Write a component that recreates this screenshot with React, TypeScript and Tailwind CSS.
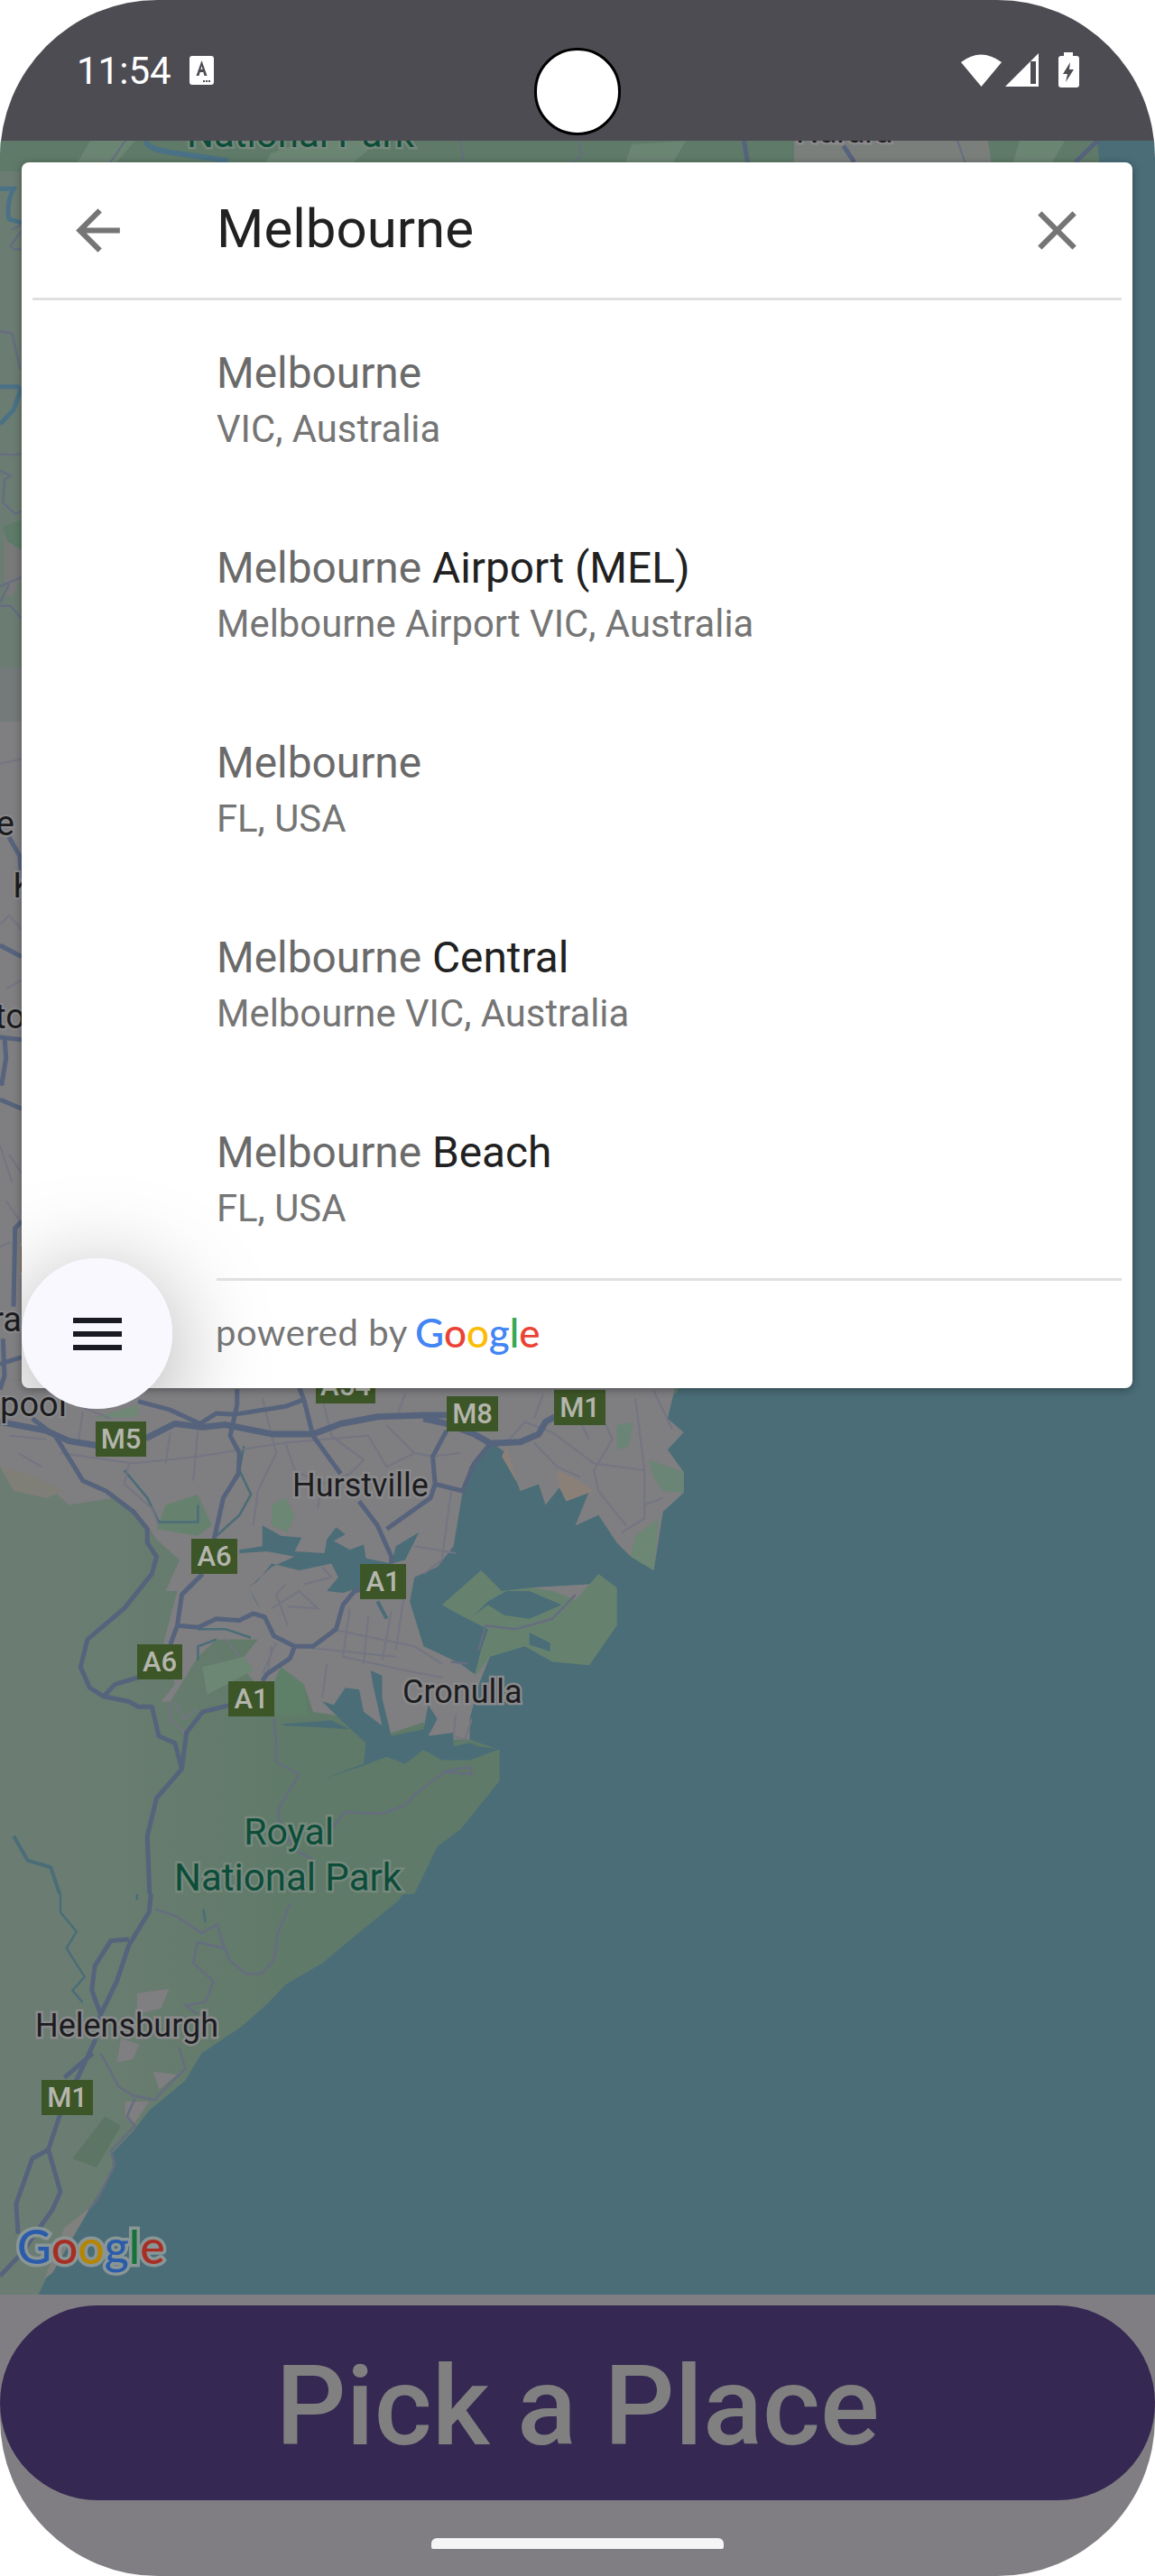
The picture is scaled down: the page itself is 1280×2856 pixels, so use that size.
const z3 = 'translate(0 1500) scale(0.5102 0.3827)';
const z4 = 'translate(0 2100) scale(0.4464 0.3333)';
const z8 = 'translate(0 150) scale(0.3333 0.3953)';
const z9 = 'translate(0 770) scale(0.3333 0.5102)';
const z10 = 'translate(0 150) scale(0.8163 0.3333)';

const WATER = '#4a6d78';
const GREEN = '#5f7a68';
const GREEN_PALE = '#6b7d72';
const URBAN = '#7f7e81';
const ROAD = '#56637c';
const THIN = '#666d80';
const MINOR = '#737582';

const shields = [
  { label: 'A54', x: 350, y: 1517, w: 66 },
  { label: 'M8', x: 495, y: 1548, w: 57 },
  { label: 'M1', x: 614, y: 1541, w: 57 },
  { label: 'M5', x: 106, y: 1576, w: 56 },
  { label: 'A6', x: 212, y: 1706, w: 51 },
  { label: 'A1', x: 399, y: 1734, w: 51 },
  { label: 'A6', x: 152, y: 1823, w: 50 },
  { label: 'A1', x: 253, y: 1864, w: 51 },
  { label: 'M1', x: 46, y: 2306, w: 57 },
];

const places = [
  { label: 'Hurstville', x: 324, y: 1659 },
  { label: 'Cronulla', x: 446, y: 1888 },
  { label: 'Helensburgh', x: 39, y: 2258 },
  { label: 'Narara', x: 882, y: 158 },
];

const cuts = [
  { label: 'e', x: 16, y: 926 },
  { label: 'K', x: 38, y: 995 },
  { label: 'to', x: 28, y: 1140 },
  { label: 'l', x: 30, y: 1411 },
  { label: 'ra', x: 24, y: 1476 },
  { label: 'rpool', x: 74, y: 1570 },
];

const results = [
  { match: 'Melbourne', rest: '', sub: 'VIC, Australia' },
  { match: 'Melbourne', rest: ' Airport (MEL)', sub: 'Melbourne Airport VIC, Australia' },
  { match: 'Melbourne', rest: '', sub: 'FL, USA' },
  { match: 'Melbourne', rest: ' Central', sub: 'Melbourne VIC, Australia' },
  { match: 'Melbourne', rest: ' Beach', sub: 'FL, USA' },
];

const COAST =
  'M0 80H1470L1450 190L1485 230L1450 280L1485 345L1485 405L1440 460L1420 630L1370 590L1340 550L1300 470L1250 500L1280 400L1215 390L1185 440L1170 380L1130 400L1100 290L1070 262L1020 330L1005 400L985 560L950 620L900 650L890 720L920 850L1000 900L1030 930L1070 860L1040 960L1020 1060L1020 1120';

const MapBackdrop = () => (
  <svg className="absolute inset-0" width="1280" height="2388" viewBox="0 156 1280 2388">
    <defs>
      <linearGradient id="landMid" x1="0" y1="0" x2="1" y2="0">
        <stop offset="0.1" stopColor={GREEN_PALE} />
        <stop offset="0.45" stopColor={GREEN} />
      </linearGradient>
      <linearGradient id="landSouth" x1="0" y1="0" x2="1" y2="0">
        <stop offset="0.17" stopColor={GREEN_PALE} />
        <stop offset="0.76" stopColor={GREEN} />
      </linearGradient>
    </defs>
    <rect x="0" y="156" width="1280" height="2388" fill={WATER} />

    {/* land north of the card */}
    <path d="M0 156H1216L1240 400L800 1400L750 1545H0Z" fill={GREEN} />
    <path d="M0 190H24V740H0Z" fill={GREEN_PALE} />
    <path d="M880 156H1095L1100 190H880Z" fill="#7a7f7c" />
    <path d="M100 156H150L120 190H80ZM300 170L340 156H420L380 190H290ZM700 160L760 156L740 190H690ZM1130 156H1180L1160 190H1120Z" fill="#6b8573" />
    <path d="M0 740H24V800H0Z" fill="#747a7a" />
    <path d="M0 800H24V1545H0Z" fill={URBAN} />
    <path d="M5 590L24 585V640L15 660H5Z" fill="#777a78" />
    <path d="M3 584L24 576V610L8 600Z" fill="#5d7b68" />

    {/* land below the card, z3 coordinates */}
    <g transform={z3}>
      <path d={`${COAST}L1085 1150L1085 1240L1000 1380L950 1430L900 1568H0Z`} fill="url(#landMid)" />
      <path
        d={`${COAST}L930 1120L920 1070L830 1110L800 1100L780 1060L680 1040L660 960L610 910L580 1000L520 900L450 990L440 910L530 880L560 830L470 830L430 880L370 1010L350 1010L380 960L355 840L385 690L360 690L390 600L340 540L320 500L250 420L150 440L100 380L0 330Z`}
        fill={URBAN}
      />
      <path d="M610 910L660 960L670 1050L600 1050L580 1000Z" fill="#5f8068" />
      <path d="M360 440L430 410L460 500L430 530L340 510Z" fill="#66826f" />
      <path d="M1410 310L1485 345L1485 405L1440 400L1420 360Z" fill="#6a8576" />
      <path d="M1380 530L1430 480L1420 630L1370 590Z" fill="#6c8773" />
      <path d="M1340 210L1375 200L1365 270L1340 280Z" fill="#6a8576" />
      <path d="M590 440L620 420L640 470L625 520L590 500Z" fill="#6c8773" />
      <path d="M1100 270L1125 380L1090 300Z" fill="#8a8078" />
      <path d="M1210 340L1250 365L1290 400L1230 430L1215 390Z" fill="#8a8078" />
      <path d="M0 330L60 350L140 400L100 420L30 400Z" fill="#7f7f78" />
      <path d="M440 910L530 880L550 920L450 990Z" fill="#6c8773" />
      <path d="M200 190L300 150L300 185L220 190Z" fill="#6f8876" />

      {/* Kurnell */}
      <path
        d="M960 730L1045 630L1090 690L1150 680L1280 670L1300 640L1340 680L1340 790L1280 905L1200 895L1140 850L1065 880L1030 940L1045 860L1060 800L1000 760Z"
        fill="#66826f"
      />
      <path d="M1155 680L1280 670L1250 715L1200 690Z" fill={URBAN} />
      <path d="M1030 760L1060 730L1095 760L1150 770L1220 730L1150 690L1100 690L1060 720Z" fill={WATER} />
      <path d="M1150 810L1195 840L1195 865L1150 845Z" fill={WATER} />

      {/* Georges River and Port Hacking */}
      <path
        d="M520 570L570 560L570 500L610 530L655 535L640 575L705 580L710 540L730 505L750 525L725 545L760 570L790 555L795 595L850 610L880 640L780 680L745 695L710 690L735 650L720 610L650 630L590 610L560 660L540 680L555 720L565 740L540 680L590 620L640 590L580 575L520 580Z"
        fill={WATER}
      />
      <path d="M910 520L880 600L850 610L860 560Z" fill={WATER} />
      <path
        d="M1085 1148L1020 1180L960 1180L920 1150L880 1190L840 1170L780 1200L700 1235L790 1190L795 1130L750 1075L700 1010L725 1020L750 970L780 975L790 1040L830 1080L810 960L805 920L830 935L830 1000L850 1110L920 1090L930 1020L950 1060L930 1110L985 1100L985 1140L1020 1130L1040 1140Z"
        fill={WATER}
      />
      <path d="M610 1075L720 1065L760 1090L700 1085L620 1080Z" fill={WATER} />

      <g fill="none" stroke={WATER} strokeWidth="2.5">
        <path d="M530 270L520 340L545 410L520 470L470 530" vectorEffect="non-scaling-stroke" />
        <path d="M270 340L320 420L345 490L430 490L430 440" vectorEffect="non-scaling-stroke" />
        <path d="M430 800L490 800L545 825M470 830L430 850L430 890" vectorEffect="non-scaling-stroke" />
        <path d="M820 720L840 770M30 1400L60 1470L110 1490L130 1568" strokeWidth="4" vectorEffect="non-scaling-stroke" />
      </g>

      {/* suburban streets */}
      <g fill="none" stroke={MINOR} strokeWidth="2">
        <path
          d="M20 240L100 250M130 290L290 320L430 300L620 260L800 240M280 320L270 380L330 450L345 500M370 230L360 320M430 220L420 370M590 240L600 290L560 400L550 500M720 240L790 310L760 350M840 210L900 290L940 300M1100 260L1140 200L1200 230L1290 320L1400 340L1400 480L1350 520M1290 130L1330 250L1290 340L1300 400M1380 130L1400 340M980 400L960 600L920 640M900 560L990 580M1160 260L1210 330L1260 360M1420 110L1460 220M130 130L240 190M570 130L590 240M700 130L720 240M880 120L860 190M1000 130L1080 180M1180 120L1160 190M800 240L840 330L900 290M620 260L640 340L700 380L760 350M700 380L690 450M1300 400L1360 500M940 300L1000 290M1240 150L1280 250M180 170L170 260M40 290L90 330M1400 440L1440 420"
          vectorEffect="non-scaling-stroke"
        />
        <path
          d="M590 740L650 690L690 740L625 735M620 670L600 700L625 790M700 620L720 650L660 670M720 800L900 850L960 900M760 740L745 880L880 920L960 940M800 760L790 900M850 750L830 890M880 680L860 860M640 850L860 880M600 840L570 930M710 900L700 1000M520 880L490 830M380 1010L400 1060L430 1030M370 1010L370 1060L400 1100M990 1050L985 1110L1010 1120L1025 1060M580 940L590 850"
          vectorEffect="non-scaling-stroke"
        />
      </g>

      {/* highways */}
      <g fill="none" stroke={ROAD} strokeWidth="5" strokeLinejoin="round">
        <path
          d="M0 200L100 225L150 255L210 268L320 245L380 205L440 215L490 208L590 235L680 235L740 205L820 185L920 180L970 180M920 190L970 205L1030 235L1065 262L1130 258L1170 235L1185 200L1205 185"
          strokeWidth="7"
          vectorEffect="non-scaling-stroke"
        />
        <path
          d="M300 140L370 165L435 205L470 175L510 178L620 155L660 135L650 100M515 105L515 150L500 240L520 290L518 350L485 420L465 540M660 135L680 240L740 350"
          vectorEffect="non-scaling-stroke"
        />
        <path
          d="M780 430L820 500L850 590L850 610M840 510L935 420L945 380L940 300L970 225M945 380L1005 400L1030 320L1065 262"
          vectorEffect="non-scaling-stroke"
        />
        <path
          d="M70 190L120 240L180 370L230 400L290 460L320 510L320 550L340 590L330 640L270 740L190 830L175 910L195 970L225 995L280 1010L300 1025L330 1025L345 1110L380 1130L395 1205L340 1290L320 1400L325 1568"
          vectorEffect="non-scaling-stroke"
        />
        <path
          d="M440 640L395 700L385 790L370 845M300 940L250 960L225 995M385 790L430 795L470 770L520 775L550 755L575 765L595 820L640 850L680 850L730 800L745 730L770 690L785 685M640 850L630 885L580 930L570 950M500 1020L440 1040L405 1100L395 1205"
          vectorEffect="non-scaling-stroke"
        />
      </g>
      <g fill="none" stroke={THIN} strokeWidth="2.5">
        <path
          d="M595 1060L600 1130L600 1185L650 1220L605 1320L605 1350L640 1440L680 1468M720 1380L750 1330L830 1335L880 1310L900 1280L970 1210L1020 1200L1025 1220L970 1215M1040 860L1055 790L1120 800L1200 770L1250 700M980 895L1015 900"
          vectorEffect="non-scaling-stroke"
        />
      </g>
    </g>

    {/* south coast, z4 coordinates */}
    <g transform={z4}>
      <path
        d="M0 0H1000L990 20L880 140L800 230L710 300L660 370L600 440L500 530L460 620L370 720L330 790L280 860L280 920L225 1040L180 1100L110 1290L95 1332H0Z"
        fill="url(#landSouth)"
      />
      <path d="M340 330L420 315L400 380L340 400Z" fill={URBAN} />
      <path d="M300 480L345 500L330 550L290 560Z" fill={URBAN} />
      <path d="M380 590L440 600L395 650Z" fill={URBAN} />
      <path d="M310 690L370 690L330 770L310 740Z" fill={URBAN} />
      <path d="M180 880L260 740L300 770L240 910Z" fill="#5c7565" />
      <path d="M160 1110L225 1040L130 1260L110 1280Z" fill="#80807f" />
      <g fill="none" stroke={WATER} strokeWidth="2.5">
        <path
          d="M150 0L150 60L190 125L165 180L210 275L180 320L205 360M505 50L510 95M340 0L340 20"
          vectorEffect="non-scaling-stroke"
        />
      </g>
      <g fill="none" stroke={ROAD} strokeWidth="5" strokeLinejoin="round">
        <path
          d="M375 0L370 60L320 170L290 290L250 400L235 490L200 590L150 730L120 850L150 990L130 1050L50 1200L0 1270M320 150L275 155L235 240L228 320L250 400M230 530L160 610M120 850L80 880L40 1030L45 1130"
          vectorEffect="non-scaling-stroke"
        />
      </g>
      <g fill="none" stroke={THIN} strokeWidth="2.5">
        <path
          d="M385 50L440 75L500 130L540 100L555 180L490 160L480 230L530 290L510 360L460 370L490 400M720 30L690 130L680 220L650 265L610 265L570 220L550 150M445 510L460 580L400 660L385 685L330 670L295 640L250 530M335 680L315 740L335 770L275 855L285 900L240 1020L220 1050"
          vectorEffect="non-scaling-stroke"
        />
      </g>
    </g>

    {/* left strip beside the card */}
    <g transform={z8} fill="none">
      <path d="M0 150L45 150Q20 190 30 235L72 245M0 705L60 705L68 715L45 770L0 810" stroke="#4a7185" strokeWidth="5" vectorEffect="non-scaling-stroke" />
      <path
        d="M0 550L40 555L65 650L72 655M40 265L70 250M70 270L35 310L45 320L72 320M0 895L40 897L72 893M0 940L35 955L15 965L10 1030L50 1062L72 1055M0 1265L70 1240M0 1320L35 1320L72 1355M0 1310L30 1260"
        stroke={THIN}
        strokeWidth="2.5"
        vectorEffect="non-scaling-stroke"
      />
    </g>
    <g transform={z9} fill="none">
      <path d="M0 150L72 140M0 500L30 480L72 510M20 640L72 620M30 1000L72 1040M20 1100L72 1150M0 980L40 1060M35 1190L0 1200" stroke={MINOR} strokeWidth="2" vectorEffect="non-scaling-stroke" />
      <path
        d="M0 545L72 570M0 745L72 750M15 745L20 790L5 850M0 880L72 900M45 1330L50 1160L72 1145M10 1400L15 1480L0 1510M0 1455L72 1440M30 310L65 350L72 400"
        stroke={ROAD}
        strokeWidth="5"
        vectorEffect="non-scaling-stroke"
      />
    </g>

    {/* strip above the card */}
    <g transform={z10} fill="none">
      <path d="M200 18Q195 45 240 60L310 85" stroke="#4a7185" strokeWidth="6" vectorEffect="non-scaling-stroke" />
      <path d="M1010 18L1015 90M1145 35L1160 90M1490 18L1460 90" stroke={ROAD} strokeWidth="5" vectorEffect="non-scaling-stroke" />
      <path d="M170 18L150 90M625 18L630 90M785 18L790 60L780 90M1300 18L1310 90" stroke={THIN} strokeWidth="2" vectorEffect="non-scaling-stroke" />
    </g>

    {/* labels */}
    <g className="font-['Roboto',sans-serif]">
      {shields.map((s) => (
        <g key={`${s.label}-${s.x}`}>
          <rect x={s.x} y={s.y} width={s.w} height="39" fill="#3d5627" />
          <text x={s.x + s.w / 2} y={s.y + 30} textAnchor="middle" fontSize="31" fontWeight="500" fill="#b4b5ad">
            {s.label}
          </text>
        </g>
      ))}
      {places.map((p) => (
        <text key={p.label} x={p.x} y={p.y} fontSize="36" fill="#1c1c1e" stroke="#8a8a8c" strokeWidth="5" className="[paint-order:stroke]">
          {p.label}
        </text>
      ))}
      {cuts.map((p) => (
        <text key={p.label} x={p.x} y={p.y} textAnchor="end" fontSize="38" fill="#1c1c1e" stroke="#8a8a8c" strokeWidth="4" className="[paint-order:stroke]">
          {p.label}
        </text>
      ))}
      <text x="320" y="2045" textAnchor="middle" fontSize="41" fill="#0c4d3a" stroke="#76887c" strokeWidth="5" className="[paint-order:stroke]">
        Royal
      </text>
      <text x="319" y="2096" textAnchor="middle" fontSize="42" fill="#0c4d3a" stroke="#76887c" strokeWidth="5" className="[paint-order:stroke]">
        National Park
      </text>
      <text x="333" y="163" textAnchor="middle" fontSize="42" fill="#0c4d3a" stroke="#76887c" strokeWidth="5" className="[paint-order:stroke]">
        National Park
      </text>
    </g>
    <text x="19" y="2510" fontSize="52" fontWeight="500" stroke="#8a9696" strokeWidth="7" className="font-['Lato',sans-serif] [paint-order:stroke]">
      <tspan fill="#2a5cab">G</tspan>
      <tspan fill="#a82e24">o</tspan>
      <tspan fill="#b58505">o</tspan>
      <tspan fill="#2a5cab">g</tspan>
      <tspan fill="#15733a">l</tspan>
      <tspan fill="#a82e24">e</tspan>
    </text>
  </svg>
);

const StatusBar = () => (
  <div className="relative flex h-[156px] shrink-0 items-start justify-between bg-[#4d4c52] pl-[85px] pr-[84px] pt-[54px]">
    <div className="flex items-center gap-[20px]">
      <span className="pt-[2px] text-[42px] leading-[46px] text-white">11:54</span>
      <svg width="27" height="32" viewBox="0 0 27 32">
        <rect width="27" height="32" rx="3" fill="#fff" />
        <path d="M13.5 5L7.5 22H10.5L11.7 18H15.3L16.5 22H19.5L13.5 5ZM12.5 15L13.5 11.2L14.5 15Z" fill="#4d4c52" />
        <path d="M15 27h2v2h-2zM18 27h2v2h-2zM21 27h2v2h-2z" fill="#4d4c52" />
      </svg>
    </div>
    <svg className="mt-[4px]" width="131" height="40" viewBox="0 0 131 40">
      <path d="M0 11Q22 -6 45 11L22.5 38Z" fill="#fff" />
      <path d="M49 38L86 1V38ZM77 10V35H83V10Z" fill="#fff" fillRule="evenodd" />
      <path
        d="M114 0H124V4H128Q131 4 131 7V36Q131 39 128 39H111Q108 39 108 36V7Q108 4 111 4H114ZM121 11L113 24H118L116 33L125 19H120Z"
        fill="#fff"
        fillRule="evenodd"
      />
    </svg>
    <div className="absolute left-[592px] top-[53px] h-[97px] w-[96px] rounded-full border-[3px] border-black bg-white" />
  </div>
);

const SearchCard = () => (
  <div className="relative mx-[24px] mt-[24px] flex h-[1359px] w-[1231px] flex-col overflow-hidden rounded-[8px] bg-white shadow-[0_2px_10px_rgba(0,0,0,0.35)]">
    <div className="absolute left-0 top-[1215px] h-[167px] w-[167px] rounded-full shadow-[0_20px_110px_rgba(0,0,0,0.35)]" />
    <div className="relative flex h-[150px] shrink-0 items-center pl-[48px] pr-[47px]">
      <svg width="73" height="73" viewBox="0 0 24 24" fill="#757575">
        <path d="M20 11H7.83l5.59-5.59L12 4l-8 8 8 8 1.41-1.41L7.83 13H20v-2z" />
      </svg>
      <span className="ml-[95px] flex-1 pb-[3px] text-[60px] leading-none text-[#212121]">Melbourne</span>
      <svg width="73" height="73" viewBox="0 0 24 24" fill="#757575">
        <path d="M19 6.41L17.59 5 12 10.59 6.41 5 5 6.41 10.59 12 5 17.59 6.41 19 12 13.41 17.59 19 19 17.59 13.41 12z" />
      </svg>
    </div>
    <div className="relative mx-[12px] h-[3px] shrink-0 bg-[#e0e0e0]" />
    <div className="relative flex flex-col pl-[216px] pt-[2px]">
      {results.map((r, i) => (
        <div key={i} className="flex h-[216px] flex-col justify-center">
          <div className="text-[47.8px] leading-[56px] text-[#212121]">
            <span className="text-[#6a6a6a]">{r.match}</span>
            {r.rest}
          </div>
          <div className="mt-[9px] text-[41.8px] leading-[50px] text-[#757575]">{r.sub}</div>
        </div>
      ))}
    </div>
    <div className="relative ml-[216px] mr-[12px] mt-[2px] h-[3px] shrink-0 bg-[#e0e0e0]" />
    <div className="relative flex flex-1 items-center pb-[6px] pl-[215px] font-['Lato',sans-serif]">
      <span className="text-[40px] leading-none tracking-[0.6px] text-[#757575]">powered by</span>
      <span className="ml-[8px] text-[44px] font-medium leading-none">
        <span className="text-[#4285f4]">G</span>
        <span className="text-[#ea4335]">o</span>
        <span className="text-[#fbbc05]">o</span>
        <span className="text-[#4285f4]">g</span>
        <span className="text-[#34a853]">l</span>
        <span className="text-[#ea4335]">e</span>
      </span>
    </div>
  </div>
);

const App = () => {
  return (
    <div className="h-[2856px] w-[1280px] bg-white font-['Roboto',sans-serif]">
      <div className="flex h-full w-full flex-col overflow-hidden rounded-[175px]">
        <StatusBar />
        <div className="relative h-[2388px] shrink-0 overflow-hidden">
          <MapBackdrop />
          <div className="relative">
            <SearchCard />
          </div>
          <button className="absolute left-[24px] top-[1239px] flex h-[167px] w-[167px] flex-col items-center justify-center gap-[9px] rounded-full bg-[#f9f8ff]">
            <span className="h-[6px] w-[54px] bg-[#1a1b22]" />
            <span className="h-[6px] w-[54px] bg-[#1a1b22]" />
            <span className="h-[6px] w-[54px] bg-[#1a1b22]" />
          </button>
        </div>
        <div className="flex flex-1 flex-col items-center bg-[#807e82] pt-[12px]">
          <div className="flex h-[216px] w-full items-center justify-center rounded-[108px] bg-[#352852] pt-[8px] text-[122.5px] font-medium leading-none text-[#808080]">
            Pick a Place
          </div>
          <div className="mt-[42px] h-[12px] w-[324px] rounded-t-[6px] rounded-b-[2px] bg-[#f5f5f5]" />
        </div>
      </div>
    </div>
  );
};

export default App;
